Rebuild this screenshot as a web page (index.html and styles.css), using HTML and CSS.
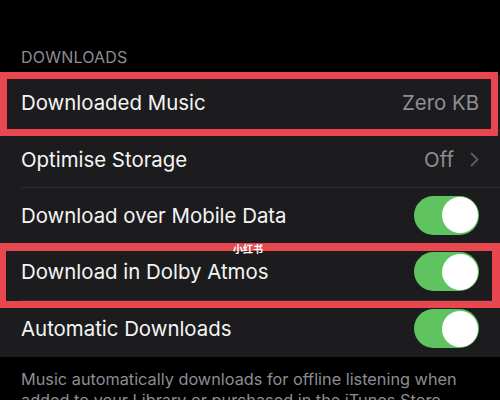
FILE: index.html
```html
<!DOCTYPE html>
<html lang="en">
<head>
  <meta charset="UTF-8" />
  <meta name="viewport" content="width=device-width, initial-scale=1.0"/>
  <title>Music Settings</title>
  <link rel="stylesheet" href="styles.css">
</head>
<body>

  <div class="group-title">DOWNLOADS</div>

  <div class="list">
    <div class="row mark mark-a">
      <div class="row-inner">
        <span class="label">Downloaded Music</span>
        <span class="value">Zero KB</span>
      </div>
    </div>

    <div class="row">
      <div class="row-inner">
        <span class="label">Optimise Storage</span>
        <span class="value">Off
          <svg class="chevron" width="9" height="15" viewBox="0 0 9 15">
            <path d="M1.5 1.5 L7.5 7.5 L1.5 13.5" fill="none" stroke="#5b5b60" stroke-width="2" stroke-linecap="round" stroke-linejoin="round"/>
          </svg>
        </span>
      </div>
    </div>

    <div class="row">
      <div class="row-inner">
        <span class="label">Download over Mobile Data</span>
        <span class="toggle on"></span>
      </div>
    </div>

    <div class="row mark mark-b">
      <div class="row-inner">
        <span class="label">Download in Dolby Atmos</span>
        <span class="toggle on"></span>
      </div>
      <span class="watermark">小红书</span>
    </div>

    <div class="row">
      <div class="row-inner last">
        <span class="label">Automatic Downloads</span>
        <span class="toggle on"></span>
      </div>
    </div>
  </div>

  <p class="footnote">Music automatically downloads for offline listening when added to your Library or purchased in the iTunes Store.</p>

</body>
</html>
```

FILE: styles.css
```css
* { box-sizing: border-box; }

body {
  margin: 0;
  background: #000;
  color: #fff;
  font-family: 'Inter', 'Noto Sans', sans-serif;
  overflow: hidden;
}

.group-title {
  height: 75px;
  padding: 47px 21px 0;
  font-size: 16px;
  color: #8d8d93;
  letter-spacing: 0.2px;
}

.list {
  background: #1c1c1e;
}

.row {
  position: relative;
  height: 56.4px;
}

.row-inner {
  height: 100%;
  margin-left: 21px;
  padding-right: 21px;
  display: flex;
  align-items: center;
  justify-content: space-between;
  border-bottom: 1px solid #303032;
}

.row-inner.last {
  border-bottom: none;
}

.label {
  font-size: 20.4px;
  color: #f5f5f5;
}

.value {
  display: flex;
  align-items: center;
  gap: 16px;
  font-size: 20.4px;
  color: #8e8e93;
}

.chevron {
  display: block;
}

.toggle {
  position: relative;
  width: 65px;
  height: 39px;
  border-radius: 20px;
  background: #3a3a3c;
}

.toggle::after {
  content: "";
  position: absolute;
  top: 1.5px;
  left: 1.5px;
  width: 36px;
  height: 36px;
  border-radius: 50%;
  background: #fff;
}

.toggle.on {
  background: #5fc35f;
}

.toggle.on::after {
  left: 27.5px;
}

/* red annotation frames drawn over the rows */
.mark::after {
  content: "";
  position: absolute;
  border: 7px solid #e8474f;
  pointer-events: none;
}

.mark-a::after {
  top: -3px;
  bottom: -5px;
  left: 0;
  right: 2px;
}

.mark-b::after {
  top: -1px;
  bottom: -7px;
  left: 0;
  right: 0;
  border-width: 8px 8px 7px 6px;
}

.watermark {
  position: absolute;
  top: -3px;
  left: 233px;
  z-index: 2;
  font-size: 10px;
  font-weight: 700;
  color: #fff;
  font-family: 'Noto Sans CJK SC', sans-serif;
}

.footnote {
  margin: 0;
  padding: 12px 21px 0;
  font-size: 16.3px;
  line-height: 21px;
  color: #8d8d93;
}
```
